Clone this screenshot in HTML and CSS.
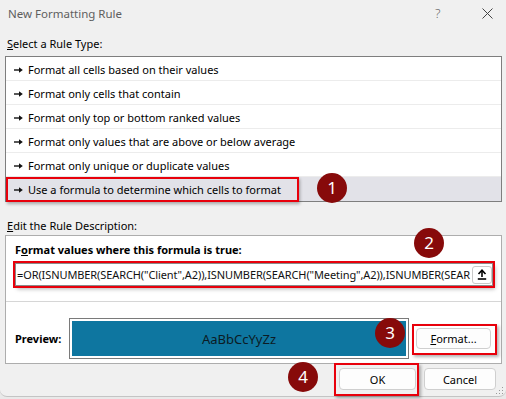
FILE: index.html
```html
<!DOCTYPE html>
<html>
<head>
<meta charset="utf-8">
<link rel="stylesheet" href="styles.css">
</head>
<body>
<div class="dialog">
  <div class="titlebar">
    <span class="title">New Formatting Rule</span>
    <span class="tb-icons">
      <span class="help">?</span>
      <svg class="close" width="11" height="11" viewBox="0 0 11 11"><path d="M0.5 0.5 L10.5 10.5 M10.5 0.5 L0.5 10.5" stroke="#444" stroke-width="1" fill="none"/></svg>
    </span>
  </div>
  <div class="content">
    <div class="label label1"><u>S</u>elect a Rule Type:</div>
    <div class="list">
      <div class="row"><svg class="arrow" width="9" height="6" viewBox="0 0 9 6"><path d="M0 3 H5.5" stroke="#111" stroke-width="1.4"/><path d="M5 0.3 L8.8 3 L5 5.7 Z" fill="#111"/></svg>Format all cells based on their values</div>
      <div class="row"><svg class="arrow" width="9" height="6" viewBox="0 0 9 6"><path d="M0 3 H5.5" stroke="#111" stroke-width="1.4"/><path d="M5 0.3 L8.8 3 L5 5.7 Z" fill="#111"/></svg>Format only cells that contain</div>
      <div class="row"><svg class="arrow" width="9" height="6" viewBox="0 0 9 6"><path d="M0 3 H5.5" stroke="#111" stroke-width="1.4"/><path d="M5 0.3 L8.8 3 L5 5.7 Z" fill="#111"/></svg>Format only top or bottom ranked values</div>
      <div class="row"><svg class="arrow" width="9" height="6" viewBox="0 0 9 6"><path d="M0 3 H5.5" stroke="#111" stroke-width="1.4"/><path d="M5 0.3 L8.8 3 L5 5.7 Z" fill="#111"/></svg>Format only values that are above or below average</div>
      <div class="row"><svg class="arrow" width="9" height="6" viewBox="0 0 9 6"><path d="M0 3 H5.5" stroke="#111" stroke-width="1.4"/><path d="M5 0.3 L8.8 3 L5 5.7 Z" fill="#111"/></svg>Format only unique or duplicate values</div>
      <div class="row selected"><svg class="arrow" width="9" height="6" viewBox="0 0 9 6"><path d="M0 3 H5.5" stroke="#111" stroke-width="1.4"/><path d="M5 0.3 L8.8 3 L5 5.7 Z" fill="#111"/></svg>Use a formula to determine which cells to format<span class="mark-row"></span></div>
    </div>
    <div class="label label2"><u>E</u>dit the Rule Description:</div>
    <div class="desc">
      <div class="formula-section">
        <div class="bold-label">F<u>o</u>rmat values where this formula is true:</div>
        <div class="formula">
          <span class="ftext">=OR(ISNUMBER(SEARCH("Client",A2)),ISNUMBER(SEARCH("Meeting",A2)),ISNUMBER(SEAR</span>
          <span class="refbtn"><svg width="10" height="11" viewBox="0 0 10 11"><path d="M5 2 V8" stroke="#000" stroke-width="1.6"/><path d="M1.5 5 L5 1.2 L8.5 5" stroke="#000" stroke-width="1.6" fill="none"/><path d="M0.8 10 H9.2" stroke="#000" stroke-width="1.6"/></svg></span>
        </div>
      </div>
      <div class="preview-section">
        <span class="bold-label plabel">Preview:</span>
        <div class="preview-box"><div class="preview-fill">AaBbCcYyZz</div></div>
        <button class="btn format-btn"><u>F</u>ormat...</button>
      </div>
    </div>
    <div class="buttons">
      <button class="btn ok-btn">OK</button>
      <button class="btn cancel-btn">Cancel</button>
    </div>
  </div>
  <span class="badge b1">1</span>
  <span class="badge b2">2</span>
  <span class="badge b3">3</span>
  <span class="badge b4">4</span>
  <svg class="grip" width="8" height="8" viewBox="0 0 8 8"><g fill="#9a9a9a"><rect x="6" y="0" width="1" height="1"/><rect x="3" y="3" width="1" height="1"/><rect x="6" y="3" width="1" height="1"/><rect x="0" y="6" width="1" height="1"/><rect x="3" y="6" width="1" height="1"/><rect x="6" y="6" width="1" height="1"/></g></svg>
</div>
</body>
</html>
```

FILE: styles.css
```css
* { box-sizing: border-box; }
html, body {
  margin: 0;
  padding: 0;
  background: #e9e9e9;
}
body {
  font-family: "Noto Sans", "Open Sans", sans-serif;
  font-size: 11px;
  color: #000;
  width: 506px;
  height: 399px;
  overflow: hidden;
}
.dialog {
  position: relative;
  width: 506px;
  height: 397px;
  background: #f0f0f0;
  border-radius: 0 0 7px 7px;
  border-bottom: 1px solid #c4c4c4;
}
.titlebar {
  height: 27px;
  display: flex;
  align-items: center;
  justify-content: space-between;
  padding-left: 8px;
}
.title {
  font-size: 11.5px;
  color: #5e5e5e;
  line-height: 27px;
}
.tb-icons {
  display: flex;
  align-items: center;
  height: 27px;
}
.help {
  font-size: 13px;
  color: #666;
  font-weight: 300;
  width: 10px;
  margin-right: 37px;
  line-height: 27px;
}
.close {
  margin-right: 13px;
}
.content {
  padding: 0 4px 0 5px;
}
.label {
  line-height: 16px;
  padding-left: 2px;
}
.label1 {
  padding-top: 9px;
  margin-bottom: 4px;
}
.label2 {
  margin-top: 16px;
  margin-bottom: 1px;
}
.list {
  background: #fff;
  border: 1px solid #7e7e7e;
  position: relative;
}
.row {
  position: relative;
  display: flex;
  align-items: flex-start;
  height: 24px;
  line-height: 21px;
  padding-top: 2px;
  padding-left: 8px;
  border-bottom: 1px solid #ececec;
  white-space: nowrap;
}
.arrow {
  margin-top: 8px;
  margin-right: 5px;
  flex: none;
}
.row.selected {
  background: #e2e2e8;
  border-bottom: none;
}
.mark-row {
  position: absolute;
  left: 0;
  top: 0;
  width: 293px;
  height: 25px;
  border: 2px solid #e8000b;
  box-shadow: 1px 2px 3px rgba(0,0,0,0.3);
}
.desc {
  background: #fff;
  border: 1px solid #adadad;
}
.formula-section {
  padding: 6px 8px 15px 9px;
}
.bold-label {
  font-weight: bold;
  line-height: 16px;
  display: block;
}
.formula {
  margin-top: 5px;
  height: 23px;
  border: 1px solid #8a8a8a;
  background: #fff;
  display: flex;
  align-items: center;
  padding-left: 1px;
  padding-right: 2px;
  outline: 2px solid #e8000b;
  box-shadow: 2px 3px 4px rgba(0,0,0,0.3);
}
.ftext {
  flex: 1;
  white-space: nowrap;
  font-size: 11px;
  letter-spacing: -0.1px;
  color: #111;
}
.refbtn {
  flex: none;
  width: 20px;
  height: 18px;
  border: 1px solid #c8c8c8;
  border-radius: 3px;
  background: #fff;
  display: flex;
  align-items: center;
  justify-content: center;
  margin-left: 2px;
}
.preview-section {
  border-top: 1px solid #d6d6d6;
  display: flex;
  align-items: center;
  gap: 7px;
  padding: 16px 10px 4px 9px;
}
.plabel {
  width: 47px;
}
.preview-box {
  flex: 1;
  height: 41px;
  border: 1px solid #7a7a7a;
  padding: 2px;
  background: #fff;
}
.preview-fill {
  height: 35px;
  background: #0e76a0;
  color: #0c1b24;
  font-size: 13px;
  display: flex;
  align-items: center;
  justify-content: center;
}
.btn {
  position: relative;
  font-family: "Noto Sans", "Open Sans", sans-serif;
  font-size: 11px;
  color: #000;
  background: #fdfdfd;
  border: 1px solid #cfcfcf;
  border-radius: 4px;
  padding: 0;
  flex: none;
}
.format-btn {
  width: 75px;
  height: 21px;
}
.format-btn::before {
  content: "";
  position: absolute;
  top: -5px;
  left: -5px;
  right: -7px;
  bottom: -7px;
  border: 2px solid #e8000b;
  box-shadow: 2px 2px 3px rgba(0,0,0,0.3);
}
.buttons {
  display: flex;
  justify-content: flex-end;
  gap: 8px;
  padding-top: 4px;
  padding-right: 6px;
}
.ok-btn {
  width: 77px;
  height: 22px;
}
.ok-btn::before {
  content: "";
  position: absolute;
  top: -6px;
  left: -6px;
  right: -4px;
  bottom: -7px;
  border: 2px solid #e8000b;
  box-shadow: 2px 2px 3px rgba(0,0,0,0.3);
}
.cancel-btn {
  width: 72px;
  height: 22px;
}
.badge {
  position: absolute;
  width: 30px;
  height: 30px;
  border-radius: 50%;
  background: #870a0a;
  color: #fff;
  font-size: 17px;
  line-height: 30px;
  text-align: center;
}
.b1 { left: 317px; top: 173px; }
.b2 { left: 414px; top: 228px; }
.b3 { left: 375px; top: 318px; }
.b4 { left: 288px; top: 362px; }
.grip {
  position: absolute;
  right: 2px;
  bottom: 1px;
}
```
